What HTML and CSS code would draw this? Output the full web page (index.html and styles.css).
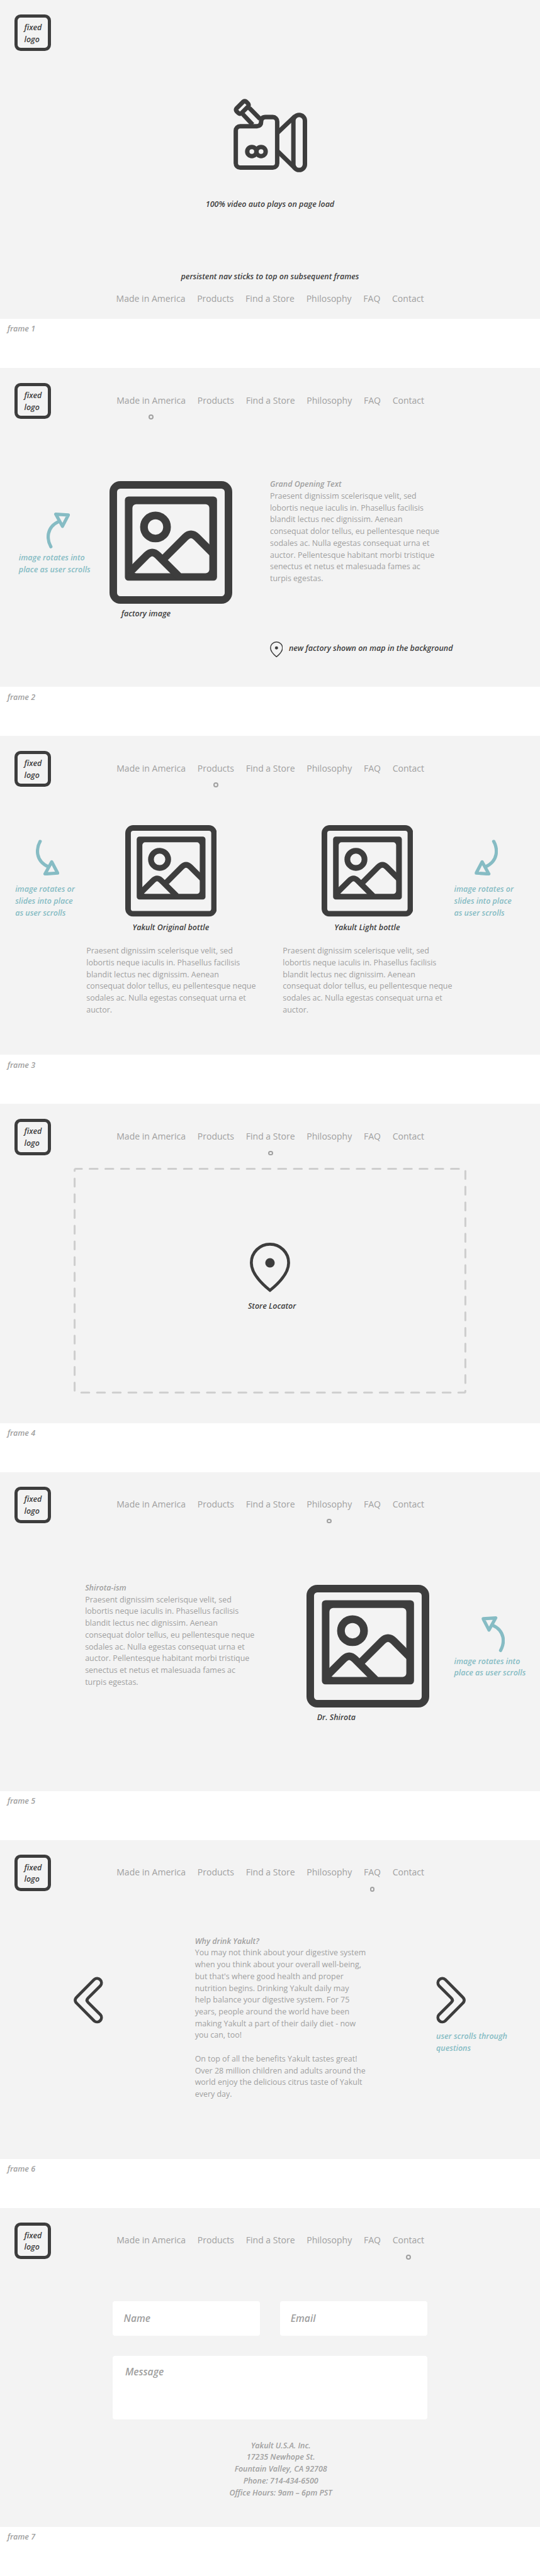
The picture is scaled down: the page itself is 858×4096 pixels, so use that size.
FILE: index.html
```html
<!DOCTYPE html>
<html lang="en">
<head>
<meta charset="utf-8">
<title>Yakult wireframes</title>
<link rel="stylesheet" href="styles.css">
</head>
<body>
<svg class="defs" aria-hidden="true">
  <symbol id="picture" viewBox="669 63 750 750">
    <rect x="692" y="86" width="704" height="704" rx="43" fill="none" stroke="currentColor" stroke-width="46"/>
    <rect x="763" y="157" width="563" height="515" rx="22" fill="currentColor"/>
    <rect x="809" y="204" width="470" height="422" rx="23" fill="#f3f3f3"/>
    <g fill="none" stroke="currentColor" stroke-width="47">
      <circle cx="950" cy="343.500" r="70.500"/>
      <path d="M787 626L897 516Q930 483 963 516L1090 643"/>
      <path d="M1000 538L1132 406Q1167 371 1202 406L1300 504"/>
    </g>
  </symbol>
  <symbol id="arrow" viewBox="283 255 143 220">
    <g fill="none" stroke="currentColor" stroke-width="20" stroke-linecap="round" stroke-linejoin="round">
      <path d="M309 464C285 420 278 345 360 308"/>
      <path d="M339 265L416 270L380 339Z"/>
    </g>
  </symbol>
  <symbol id="pin" viewBox="87 69 246 303">
    <path d="M210 360.500C160 320 96 256 96 192A114 114 0 0 1 324 192C324 256 260 320 210 360.500Z" fill="none" stroke="currentColor" stroke-width="18"/>
    <circle cx="210" cy="192" r="29" fill="currentColor"/>
  </symbol>
  <symbol id="chevron" viewBox="116 87 181 288">
    <path d="M171 104L276 210Q299 231 276 252L171 358A27 27 0 0 1 133 320L209 244Q222 231 209 218L133 142A27 27 0 0 1 171 104Z" fill="none" stroke="currentColor" stroke-width="18"/>
  </symbol>
</svg>

<section class="frame">
  <div class="stage">
    <header class="head"><div class="logo">fixed<br>logo</div></header>
    <div class="intro">
      <svg class="camera" viewBox="105 63 450 450" fill="none" stroke="currentColor" stroke-width="27">
        <path d="M146 231H248Q274 229 274 202Q274 175 301 175H345A27 27 0 0 1 372 202V457A27 27 0 0 1 345 484H146A27 27 0 0 1 119 457V258A27 27 0 0 1 146 231Z"/>
        <circle cx="217" cy="386" r="28"/>
        <circle cx="273.500" cy="386" r="28"/>
        <rect x="471" y="162" width="70.500" height="337" rx="35"/>
        <path d="M372 273L481 170M372 381L481 488"/>
        <rect x="117.500" y="95" width="83" height="42" rx="13" transform="rotate(-45 159 116)"/>
        <path d="M162 158L222 221M202 120L267 186"/>
      </svg>
      <p class="note video-note">100% video auto plays on page load</p>
      <p class="note nav-note">persistent nav sticks to top on subsequent frames</p>
      <nav class="nav"><a>Made in America</a><a>Products</a><a>Find a Store</a><a>Philosophy</a><a>FAQ</a><a>Contact</a></nav>
    </div>
  </div>
  <p class="label">frame 1</p>
</section>

<section class="frame">
  <div class="stage">
    <header class="head"><div class="logo">fixed<br>logo</div><nav class="nav"><a class="on">Made in America</a><a>Products</a><a>Find a Store</a><a>Philosophy</a><a>FAQ</a><a>Contact</a></nav></header>
    <div class="row">
      <div class="hint factory-hint"><svg class="arrow"><use href="#arrow"/></svg><p>image rotates into<br>place as user scrolls</p></div>
      <figure class="factory"><svg class="picture"><use href="#picture"/></svg><figcaption class="note">factory image</figcaption></figure>
      <div class="opening">
        <h2>Grand Opening Text</h2>
        <p>Praesent dignissim scelerisque velit, sed<br>lobortis neque iaculis in. Phasellus facilisis<br>blandit lectus nec dignissim. Aenean<br>consequat dolor tellus, eu pellentesque neque<br>sodales ac. Nulla egestas consequat urna et<br>auctor. Pellentesque habitant morbi tristique<br>senectus et netus et malesuada fames ac<br>turpis egestas.</p>
        <div class="map-note note"><svg class="pin"><use href="#pin"/></svg><p>new factory shown on map in the background</p></div>
      </div>
    </div>
  </div>
  <p class="label">frame 2</p>
</section>

<section class="frame">
  <div class="stage">
    <header class="head"><div class="logo">fixed<br>logo</div><nav class="nav"><a>Made in America</a><a class="on">Products</a><a>Find a Store</a><a>Philosophy</a><a>FAQ</a><a>Contact</a></nav></header>
    <div class="row">
      <div class="hint product-hint"><svg class="arrow down"><use href="#arrow"/></svg><p>image rotates or<br>slides into place<br>as user scrolls</p></div>
      <article class="product">
        <svg class="picture small"><use href="#picture"/></svg>
        <h3 class="note">Yakult Original bottle</h3>
        <p>Praesent dignissim scelerisque velit, sed<br>lobortis neque iaculis in. Phasellus facilisis<br>blandit lectus nec dignissim. Aenean<br>consequat dolor tellus, eu pellentesque neque<br>sodales ac. Nulla egestas consequat urna et<br>auctor.</p>
      </article>
      <article class="product">
        <svg class="picture small"><use href="#picture"/></svg>
        <h3 class="note">Yakult Light bottle</h3>
        <p>Praesent dignissim scelerisque velit, sed<br>lobortis neque iaculis in. Phasellus facilisis<br>blandit lectus nec dignissim. Aenean<br>consequat dolor tellus, eu pellentesque neque<br>sodales ac. Nulla egestas consequat urna et<br>auctor.</p>
      </article>
      <div class="hint product-hint right"><svg class="arrow down flip"><use href="#arrow"/></svg><p>image rotates or<br>slides into place<br>as user scrolls</p></div>
    </div>
  </div>
  <p class="label">frame 3</p>
</section>

<section class="frame">
  <div class="stage">
    <header class="head"><div class="logo">fixed<br>logo</div><nav class="nav"><a>Made in America</a><a>Products</a><a class="on">Find a Store</a><a>Philosophy</a><a>FAQ</a><a>Contact</a></nav></header>
    <div class="map">
      <svg class="dashes" viewBox="0 0 800 460"><path d="M2 5A3 3 0 0 1 5 2H795A3 3 0 0 1 798 5V455A3 3 0 0 1 795 458H5A3 3 0 0 1 2 455V5" fill="none" stroke="currentColor" stroke-width="4" stroke-linecap="round" stroke-dasharray="16 16"/></svg>
      <svg class="pin big"><use href="#pin"/></svg>
      <p class="note">Store Locator</p>
    </div>
  </div>
  <p class="label">frame 4</p>
</section>

<section class="frame">
  <div class="stage">
    <header class="head"><div class="logo">fixed<br>logo</div><nav class="nav"><a>Made in America</a><a>Products</a><a>Find a Store</a><a class="on">Philosophy</a><a>FAQ</a><a>Contact</a></nav></header>
    <div class="row">
      <div class="shirota-text">
        <h2>Shirota-ism</h2>
        <p>Praesent dignissim scelerisque velit, sed<br>lobortis neque iaculis in. Phasellus facilisis<br>blandit lectus nec dignissim. Aenean<br>consequat dolor tellus, eu pellentesque neque<br>sodales ac. Nulla egestas consequat urna et<br>auctor. Pellentesque habitant morbi tristique<br>senectus et netus et malesuada fames ac<br>turpis egestas.</p>
      </div>
      <figure class="shirota"><svg class="picture"><use href="#picture"/></svg><figcaption class="note">Dr. Shirota</figcaption></figure>
      <div class="hint shirota-hint"><svg class="arrow mirror"><use href="#arrow"/></svg><p>image rotates into<br>place as user scrolls</p></div>
    </div>
  </div>
  <p class="label">frame 5</p>
</section>

<section class="frame">
  <div class="stage">
    <header class="head"><div class="logo">fixed<br>logo</div><nav class="nav"><a>Made in America</a><a>Products</a><a>Find a Store</a><a>Philosophy</a><a class="on">FAQ</a><a>Contact</a></nav></header>
    <div class="row">
      <svg class="chevron prev"><use href="#chevron"/></svg>
      <div class="faq">
        <h2>Why drink Yakult?</h2>
        <p>You may not think about your digestive system<br>when you think about your overall well-being,<br>but that's where good health and proper<br>nutrition begins. Drinking Yakult daily may<br>help balance your digestive system. For 75<br>years, people around the world have been<br>making Yakult a part of their daily diet - now<br>you can, too!</p>
        <p class="more">On top of all the benefits Yakult tastes great!<br>Over 28 million children and adults around the<br>world enjoy the delicious citrus taste of Yakult<br>every day.</p>
      </div>
      <div class="hint next"><svg class="chevron"><use href="#chevron"/></svg><p>user scrolls through<br>questions</p></div>
    </div>
  </div>
  <p class="label">frame 6</p>
</section>

<section class="frame">
  <div class="stage">
    <header class="head"><div class="logo">fixed<br>logo</div><nav class="nav"><a>Made in America</a><a>Products</a><a>Find a Store</a><a>Philosophy</a><a>FAQ</a><a class="on">Contact</a></nav></header>
    <div class="form">
      <div class="field">Name</div>
      <div class="field">Email</div>
      <div class="field message">Message</div>
    </div>
    <address>Yakult U.S.A. Inc.<br>17235 Newhope St.<br>Fountain Valley, CA 92708<br>Phone: 714-434-6500<br>Office Hours: 9am – 6pm PST</address>
  </div>
  <p class="label">frame 7</p>
</section>
</body>
</html>
```

FILE: styles.css
```css
/* 1rem stands for 100 design pixels */
html { font-size: 78px; }
*, *::after { box-sizing: border-box; margin: 0; padding: 0; }
body {
  width: 11rem;
  font: 400 0.16rem/0.24rem "Open Sans", sans-serif;
  color: #a0a0a0;
  background: #fff;
  white-space: nowrap;
}
svg { display: block; flex: none; }
.defs { position: absolute; width: 0; height: 0; }
h2, h3 { font-size: inherit; font-weight: 600; font-style: italic; }

.frame { height: 7.502rem; }
.stage { height: 6.502rem; background: #f3f3f3; overflow: hidden; }
.label { padding: 0.094rem 0 0 0.15rem; font-weight: 600; font-style: italic; }
.note { color: #3d3d3d; font-weight: 600; font-style: italic; }

.head { display: flex; height: 1.04rem; padding: 0.3rem 0 0 0.3rem; }
.logo {
  flex: none;
  width: 0.74rem;
  height: 0.74rem;
  padding: 0.083rem 0 0 0.13rem;
  border: 0.065rem solid #3d3d3d;
  border-radius: 0.125rem;
  color: #3d3d3d;
  font-weight: 600;
  font-style: italic;
}
.nav { display: flex; gap: 0.24rem; font-size: 0.18rem; }
.head .nav { margin: 0.245rem 0 0 1.335rem; }
.nav a { position: relative; height: 0.24rem; }
.nav .on::after {
  content: "";
  position: absolute;
  left: calc(50% - 0.05rem);
  top: 0.405rem;
  width: 0.1rem;
  height: 0.1rem;
  border: 2px solid #a0a0a0;
  border-radius: 50%;
}

.row { display: flex; align-items: flex-start; }
.picture { width: 2.5rem; height: 2.5rem; color: #3d3d3d; }
.picture.small { width: 1.866rem; height: 1.866rem; }
.pin { width: 0.265rem; height: 0.325rem; color: #3d3d3d; }
.pin.big { width: 0.82rem; height: 1.01rem; }
.chevron { width: 0.603rem; height: 0.96rem; color: #3d3d3d; }
.arrow { width: 0.477rem; height: 0.733rem; }
.arrow.down { transform: scaleY(-1); }
.arrow.down.flip { transform: scale(-1, -1); }
.arrow.mirror { transform: scaleX(-1); }
.hint { flex: none; color: #86bcc4; font-weight: 600; font-style: italic; }

/* frame 1 */
.intro { display: flex; flex-direction: column; align-items: center; padding-top: 0.97rem; }
.camera { width: 1.5rem; height: 1.5rem; color: #3d3d3d; }
.video-note { margin-top: 0.539rem; }
.nav-note { margin-top: 1.242rem; }
.intro .nav { margin-top: 0.205rem; }

/* frame 2 */
.factory-hint { width: 1.847rem; margin: 1.91rem 0 0 0.383rem; }
.factory-hint .arrow { margin-left: 0.56rem; }
.factory-hint p { margin-top: 0.072rem; }
.factory { width: 3.27rem; margin-top: 1.27rem; }
.factory figcaption { padding: 0.087rem 0 0 0.24rem; }
.opening { margin-top: 1.219rem; }
.map-note { display: flex; gap: 0.125rem; margin: 1.158rem 0 0 -0.006rem; }
.map-note p { margin-top: 0.029rem; }

/* frame 3 */
.product-hint { width: 1.45rem; margin: 1.075rem 0 0 0.31rem; }
.product-hint .arrow { margin-left: 0.415rem; }
.product-hint p { margin-top: 0.167rem; }
.product { width: 4rem; margin-top: 0.782rem; }
.product .picture { margin-left: 0.787rem; }
.product .note { width: 3.44rem; margin-top: 0.107rem; text-align: center; }
.product p { margin-top: 0.233rem; }
.product-hint.right { width: auto; margin-left: -0.51rem; }

/* frame 4 */
.map {
  position: relative;
  display: flex;
  flex-direction: column;
  align-items: center;
  width: 8rem;
  height: 4.6rem;
  margin: 0.26rem auto 0;
  padding-top: 1.53rem;
}
.dashes { position: absolute; inset: 0; width: 8rem; height: 4.6rem; color: #cecece; }
.map .note { margin-top: 0.165rem; padding-left: 0.08rem; }

/* frame 5 */
.shirota-text { width: 4.505rem; margin: 1.21rem 0 0 1.733rem; }
.shirota { width: 3.012rem; margin-top: 1.26rem; }
.shirota figcaption { padding: 0.087rem 0 0 0.22rem; }
.shirota-hint { margin-top: 1.9rem; }
.shirota-hint .arrow { margin-left: 0.56rem; }
.shirota-hint p { margin-top: 0.072rem; }

/* frame 6 */
.chevron.prev { margin: 1.75rem 0 0 1.5rem; transform: scaleX(-1); }
.faq { width: 4.915rem; margin: 0.909rem 0 0 1.867rem; }
.faq .more { margin-top: 0.24rem; }
.next { margin-top: 1.75rem; }
.next p { margin-top: 0.144rem; }

/* frame 7 */
.form {
  display: grid;
  grid-template-columns: 3rem 3rem;
  grid-template-rows: 0.7rem 1.3rem;
  gap: 0.41rem 0.4rem;
  margin: 0.86rem 0 0 2.3rem;
}
.field {
  padding: 0.23rem 0 0 0.22rem;
  border-radius: 0.05rem;
  background: #fff;
  font-size: 0.2rem;
  font-weight: 600;
  font-style: italic;
}
.field.message { grid-column: span 2; padding: 0.207rem 0 0 0.25rem; }
address { margin-top: 0.419rem; padding-left: 0.44rem; text-align: center; font-weight: 600; }
```
